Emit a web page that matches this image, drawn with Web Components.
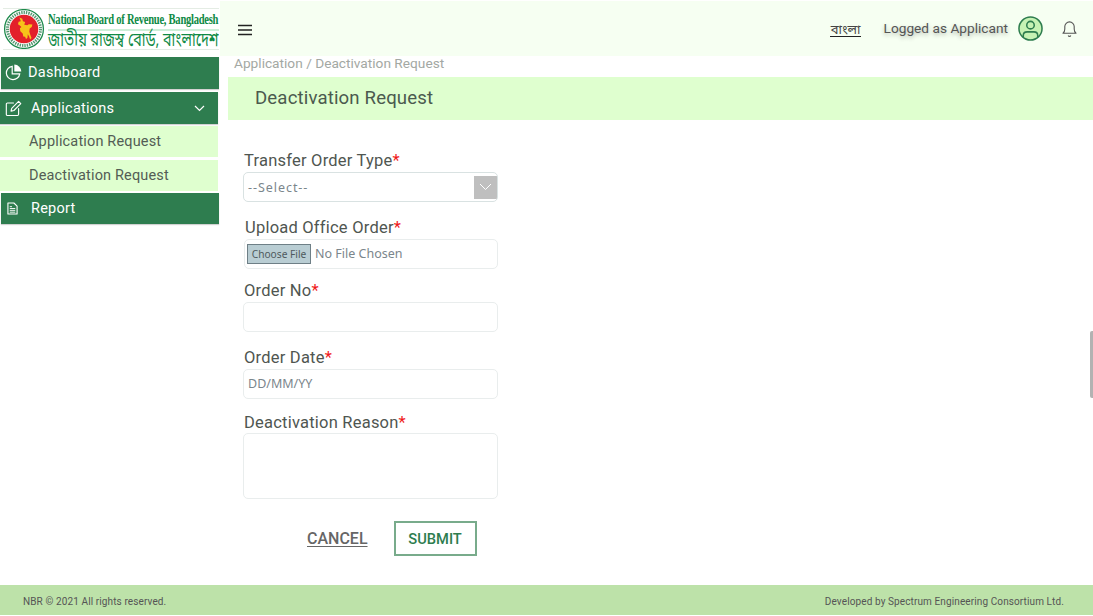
<!DOCTYPE html>
<html lang="en">
<head>
<meta charset="utf-8">
<title>Deactivation Request</title>
<style>
  html, body { margin: 0; height: 100%; background: #fff; overflow: hidden; }
  body { font-family: Roboto, "Liberation Sans", sans-serif; }
</style>
</head>
<body>
<app-shell>
  <nbr-logo slot="logo"></nbr-logo>
  <top-bar slot="top"></top-bar>
  <side-menu slot="side">
    <side-item icon="pie" style="margin:2px 0 0 1px;padding-bottom:1px">Dashboard</side-item>
    <side-item icon="edit" caret style="margin-top:2.5px;padding-top:1px">Applications</side-item>
    <sub-item style="margin-top:2.5px">Application Request</sub-item>
    <sub-item style="margin-top:3px">Deactivation Request</sub-item>
    <side-item icon="doc" style="margin:2px 0 0 1px;height:31px;padding-bottom:1px">Report</side-item>
  </side-menu>
  <page-head slot="main" crumb="Application / Deactivation Request">Deactivation Request</page-head>
  <request-form slot="main">
    <form-field label="Transfer Order Type" style="margin-top:30.5px"><select-box>--Select--</select-box></form-field>
    <form-field label="Upload Office Order" style="margin:15px 0 0 1px"><file-box>No File Chosen</file-box></form-field>
    <form-field label="Order No" style="margin-top:11px"><text-box></text-box></form-field>
    <form-field label="Order Date" style="margin-top:15px"><text-box>DD/MM/YY</text-box></form-field>
    <form-field label="Deactivation Reason" tight style="margin-top:13px"><text-box tall></text-box></form-field>
    <form-actions style="margin-top:22px"></form-actions>
  </request-form>
  <nbr-footer slot="foot"></nbr-footer>
</app-shell>

<script>
function define(name, css, html) {
  customElements.define(name, class extends HTMLElement {
    constructor() {
      super();
      const root = this.attachShadow({ mode: 'open' });
      root.innerHTML = `<style>${css}</style>${typeof html === 'function' ? html(this) : html}`;
    }
  });
}

const icons = {
  pie: `<svg width="17" height="17" viewBox="0 0 17 17" fill="none" stroke="#fff" stroke-width="1.200"><path d="M7.200 2.300a6.700 6.700 0 1 0 7.500 7.500H7.200z"/><path d="M9.300 .6a7 7 0 0 1 7 7h-7z" fill="#fff" stroke="none"/></svg>`,
  edit: `<svg width="17" height="17" viewBox="0 0 18 18" fill="none" stroke="#fff" stroke-width="1.200" stroke-linejoin="round" stroke-linecap="round"><path d="M9 3.200H2.600a1.200 1.200 0 0 0-1.200 1.200v10.800a1.200 1.200 0 0 0 1.200 1.200h10.600a1.200 1.200 0 0 0 1.200-1.200V9"/><path d="M6.400 11.800l.7-3L14.400 1.500l2.300 2.300-7.300 7.300z"/></svg>`,
  doc: `<svg width="11" height="13" viewBox="0 0 12 14" fill="none" stroke="#fff" stroke-width="1.200" stroke-linejoin="round"><path d="M1 1h6.500L11 4.500V13H1z"/><path d="M3 7h6M3 9h6M3 11h6M3 5h2.500" stroke-width="1"/></svg>`
};

define('app-shell', `
  :host { display: grid; grid-template-columns: 220px 1fr; grid-template-rows: 55px 530px 30px; height: 616px; }
  .logo { grid-column: 1; grid-row: 1; }
  .top { grid-column: 2; grid-row: 1; }
  .side { grid-column: 1; grid-row: 2; }
  .main { grid-column: 2; grid-row: 2; padding-left: 8px; min-width: 0; }
  .foot { grid-column: 1 / 3; grid-row: 3; }
  .thumb { position: absolute; right: 0; top: 331px; width: 3px; height: 67px; background: #b2b2b2; border-radius: 2px 0 0 2px; }
`, `
  <div class="logo"><slot name="logo"></slot></div>
  <div class="top"><slot name="top"></slot></div>
  <div class="side"><slot name="side"></slot></div>
  <div class="main"><slot name="main"></slot></div>
  <div class="foot"><slot name="foot"></slot></div>
  <div class="thumb"></div>
`);

define('nbr-logo', `
  :host { display: block; padding: 8px 0 0 3px; }
  .box { display: flex; width: 216px; height: 42px; box-sizing: border-box; align-items: flex-start; background: #fff; border-top: 1px solid #e4ece4; border-bottom: 1px solid #e4ece4; }
  svg { flex: none; display: block; }
  .txt { flex: 1; min-width: 0; padding-left: 1px; color: #0f8a45; white-space: nowrap; }
  .en { height: 20px; border-bottom: 2px solid #cdeed8; }
  .en span { display: inline-block; font: bold 14px/21px "Liberation Serif", serif; letter-spacing: -.35px; transform: scaleX(.755); transform-origin: left; }
  .bn { height: 19px; }
  .bn span { display: inline-block; font: 18.500px/19px "Noto Sans Bengali", "Noto Serif Bengali", "Lohit Bengali", "Liberation Serif", serif; transform: scaleX(.77); transform-origin: left; }
`, `
  <div class="box">
    <svg width="44" height="40" viewBox="0 0 44 40">
      <circle cx="21" cy="20" r="19.400" fill="#fff" stroke="#1d8a4c" stroke-width="1.300"/>
      <circle cx="21" cy="20" r="16.500" fill="none" stroke="#2a7d4c" stroke-width="3" stroke-dasharray="1.400 1" opacity=".8"/>
      <circle cx="21" cy="20" r="14.300" fill="#e3202a"/>
      <path d="M16.500 8.500l2.800 1.200.6 2.600 2.200.8-.8 2.700 3 .5 1.500-1 3.600.2-.7 2.600-2 1.300-.4 3 .8 2.800 1.400 3.900-1.400 1.300-1-3-1.300-2.100-.3 3.400-1.500 1.200-.9-2.200-1.800-.2-.6-3.100-2.400-2.200-.4-2.900 1.500-1.300-1.600-1.500-1.800-1.300.6-2.400 2.200-.6z" fill="#f7c21a"/>
    </svg>
    <div class="txt">
      <div class="en"><span>National Board of Revenue, Bangladesh</span></div>
      <div class="bn"><span>জাতীয় রাজস্ব বোর্ড, বাংলাদেশ</span></div>
    </div>
  </div>
`);

define('top-bar', `
  :host { display: flex; align-items: center; height: 55px; background: #f6fff2; margin-top: 1px; box-sizing: border-box; color: #555; font-size: 13.700px; }
  .burger { margin: 3px 0 0 18px; display: block; }
  .lang { margin: 5px 0 0 auto; font-family: "Noto Sans Bengali", "Lohit Bengali", "Liberation Sans", sans-serif; font-size: 13px; color: #444; border-bottom: 1.500px solid #222; line-height: 11px; padding: 0 0 0 1px; }
  .who { margin: -2px 0 0 23px; text-shadow: 0 2px 4px rgba(0,0,0,.3); }
  .avatar { margin-left: 10px; display: block; }
  .bell { margin: 0 16px 0 19px; display: block; }
`, `
  <svg class="burger" width="14" height="12" viewBox="0 0 14 12" stroke="#222" stroke-width="1.400"><path d="M0 1.500h14M0 6h14M0 10.500h14"/></svg>
  <span class="lang">বাংলা</span>
  <span class="who">Logged as Applicant</span>
  <svg class="avatar" width="25" height="25" viewBox="0 0 26 26" fill="none" stroke="#2e7d4f" stroke-width="1.600"><circle cx="13" cy="13" r="12" fill="#c6f2b4"/><circle cx="13" cy="9.500" r="3.900"/><path d="M5.500 21.800v-1.600c0-2.500 2-3.700 4-3.700h7c2 0 4 1.200 4 3.700v1.600" stroke-linecap="round"/></svg>
  <svg class="bell" width="15" height="17" viewBox="0 0 15 17" fill="none" stroke="#555" stroke-width="1.100" stroke-linejoin="round"><path d="M1 13.300c1.300-1 1.800-2.200 1.800-4.300V6.600a4.700 4.700 0 0 1 9.400 0V9c0 2.100.5 3.300 1.800 4.300z"/><path d="M6.200 15.500a1.400 1.400 0 0 0 2.600 0"/></svg>
`);

define('side-menu', `:host { display: block; width: 219px; }`, `<slot></slot>`);

define('side-item', `
  :host { display: flex; align-items: center; width: 218px; height: 32px; box-sizing: border-box; background: #2e7d4f; color: #fff; font-size: 14.500px; letter-spacing: .25px; box-shadow: 0 1px 1px rgba(0,0,0,.18); }
  .ic { flex: none; width: 27px; padding-left: 4px; box-sizing: border-box; display: flex; }
  .ic.doc { width: 30px; padding: 1px 0 0 6px; }
  .ic.edit { width: 31px; padding-left: 5px; }
  .caret { margin: 1px 13px 0 auto; display: block; }
`, el => `
  <span class="ic ${el.getAttribute('icon')}">${icons[el.getAttribute('icon')]}</span>
  <slot></slot>
  ${el.hasAttribute('caret') ? '<svg class="caret" width="11" height="7" viewBox="0 0 11 7" fill="none" stroke="#fff" stroke-width="1.200"><path d="M1 1l4.500 4.500L10 1"/></svg>' : ''}
`);

define('sub-item', `
  :host { display: flex; align-items: center; width: 218px; height: 31px; box-sizing: border-box; padding-left: 29px; background: #dfffcf; color: #535d55; font-size: 14.500px; letter-spacing: .16px; }
`, `<slot></slot>`);

define('page-head', `
  :host { display: block; }
  .crumb { height: 22px; padding-left: 6px; font-size: 13.700px; line-height: 17px; color: #a3a8a3; box-sizing: border-box; }
  .band { height: 42.500px; background: #dfffcf; padding-left: 27px; display: flex; align-items: center; font-size: 18.600px; color: #4b5a4e; letter-spacing: .15px; }
`, el => `<div class="crumb">${el.getAttribute('crumb')}</div><div class="band"><slot></slot></div>`);

define('request-form', `
  :host { display: block; width: 255px; margin-left: 15px; }
`, `<slot></slot>`);

define('form-field', `
  :host { display: block; }
  label { display: block; height: 21px; padding: 1px 0 0 1px; box-sizing: border-box; font-size: 16.500px; line-height: 20px; letter-spacing: .22px; color: #4f5651; margin-bottom: 1px; white-space: nowrap; }
  :host([tight]) label { margin-bottom: 0; }
  b { color: #f01818; font-weight: 400; }
`, el => `<label>${el.getAttribute('label')}<b>*</b></label><slot></slot>`);

const boxCss = `
  :host { display: flex; align-items: center; height: 30px; box-sizing: border-box; border: 1px solid #e9eded; border-radius: 5px; background: #fff; color: #7b868c; font-family: "Noto Sans", sans-serif; font-size: 12.500px; overflow: hidden; }
`;

define('text-box', boxCss + `
  :host { padding: 0 0 1px 4px; }
  :host([tall]) { height: 66px; }
`, `<slot></slot>`);

define('select-box', boxCss + `
  :host { padding-left: 4px; border-color: #d9e2e2; letter-spacing: .95px; }
  .arrow { margin-left: auto; width: 23px; height: 23px; background: #bfbfbf; display: flex; align-items: center; justify-content: center; }
`, `<slot></slot><span class="arrow"><svg width="13" height="8" viewBox="0 0 13 8" fill="none" stroke="#fff" stroke-width="1"><path d="M1 1l5.500 5.500L12 1"/></svg></span>`);

define('file-box', boxCss + `
  :host { padding: 0 0 1px 2px; }
  .btn { width: 64px; height: 20px; box-sizing: border-box; margin-right: 4px; background: #b9cdd3; border: 1px solid #6e7f86; color: #4f5a5e; font-size: 10.200px; display: flex; align-items: center; justify-content: center; white-space: nowrap; }
`, `<span class="btn">Choose File</span><slot></slot>`);

define('form-actions', `
  :host { display: flex; align-items: center; height: 35px; padding-left: 64px; }
  .cancel { font-size: 16px; font-weight: 500; color: #666; text-decoration: underline; text-underline-offset: 2px; }
  .submit { margin-left: 26px; width: 83px; height: 35px; box-sizing: border-box; border: 2px solid #78ab8b; color: #2e7d4f; font-size: 14.700px; font-weight: 500; display: flex; align-items: center; justify-content: center; }
`, `<span class="cancel">CANCEL</span><span class="submit">SUBMIT</span>`);

define('nbr-footer', `
  :host { display: flex; align-items: center; justify-content: space-between; height: 30px; box-sizing: border-box; padding: 3px 29px 0 23px; background: #bde2a9; color: #555; font-size: 10px; letter-spacing: .11px; }
`, `<span>NBR © 2021 All rights reserved.</span><span>Developed by Spectrum Engineering Consortium Ltd.</span>`);
</script>
</body>
</html>
